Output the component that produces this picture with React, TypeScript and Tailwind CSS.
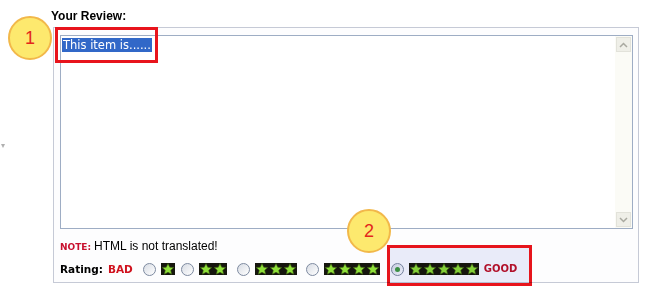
const RATINGS = [1, 2, 3, 4, 5] as const;

function Star() {
  return (
    <svg width="14" height="12" viewBox="0 0 24 22" className="shrink-0">
      <path
        d="M12 1l3.2 6.6 7.3.8-5.4 5 1.5 7.3L12 17.1l-6.6 3.6 1.5-7.3-5.4-5 7.3-.8z"
        fill="#8fe03a"
        stroke="#3c5a14"
        strokeWidth="1.2"
      />
    </svg>
  );
}

function StarBar({ count }: { count: number }) {
  return (
    <div className="flex h-[12px] items-center bg-[#16160e]">
      {Array.from({ length: count }).map((_, i) => (
        <Star key={i} />
      ))}
    </div>
  );
}

function Radio({ checked }: { checked?: boolean }) {
  return (
    <span className="flex h-[13px] w-[13px] shrink-0 items-center justify-center rounded-full border border-[#7d8aa0] bg-gradient-to-br from-[#d8dce4] to-white">
      {checked && <span className="h-[5px] w-[5px] rounded-full bg-[#3f9a45]" />}
    </span>
  );
}

function Chevron({ up }: { up?: boolean }) {
  return (
    <svg width="9" height="6" viewBox="0 0 9 6">
      <path
        d={up ? "M1 5l3.5-3.5L8 5" : "M1 1l3.5 3.5L8 1"}
        fill="none"
        stroke="#a9a9a0"
        strokeWidth="1.5"
      />
    </svg>
  );
}

function Marker({ label, className }: { label: string; className: string }) {
  return (
    <div
      className={`absolute flex h-[44px] w-[44px] items-center justify-center rounded-full border-2 border-[#f2b84a] bg-[#fde96e] text-[18px] text-[#e3261c] ${className}`}
      style={{ fontFamily: "Arial, 'Liberation Sans', sans-serif" }}
    >
      {label}
    </div>
  );
}

const GAP_BEFORE = ["ml-[10px]", "ml-[6px]", "ml-[10px]", "ml-[9px]", "ml-[11px]"];

export default function App() {
  return (
    <div
      className="relative h-[298px] w-[650px] overflow-hidden bg-white pl-[51px] pt-[9px]"
      style={{ fontFamily: "'DejaVu Sans', Verdana, sans-serif" }}
    >
      <span className="absolute left-[1px] top-[140px] text-[8px] text-[#b0b0b0]">▾</span>

      <div
        className="text-[12px] font-bold leading-[15px] text-black"
        style={{ fontFamily: "Arial, 'Liberation Sans', sans-serif" }}
      >
        Your Review:
      </div>

      <div className="ml-[2px] mt-[3px] h-[256px] w-[586px] border border-[#c6cad6] bg-[#fdfdfe] pl-[6px] pt-[7px]">
        <div className="flex h-[194px] w-[573px] border border-[#9eadc4] bg-white">
          <div className="flex flex-1 items-start pl-[1px] pt-[2px]">
            <div className="bg-[#3168c8] px-[1px] text-[11.5px] leading-[14px] text-white">
              This item is......
            </div>
          </div>
          <div className="flex w-[17px] flex-col justify-between bg-[#fbfbf6] p-[1px]">
            <div className="flex h-[15px] items-center justify-center border border-[#e2e2da] bg-[#efefe8]">
              <Chevron up />
            </div>
            <div className="flex h-[15px] items-center justify-center border border-[#e2e2da] bg-[#efefe8]">
              <Chevron />
            </div>
          </div>
        </div>

        <div
          className="mt-[9px] flex items-baseline gap-[4px] text-[12px] leading-[16px] text-black"
          style={{ fontFamily: "Arial, 'Liberation Sans', sans-serif" }}
        >
          <span
            className="text-[9px] font-bold text-[#c8102e]"
            style={{ fontFamily: "'DejaVu Sans', Verdana, sans-serif" }}
          >
            NOTE:
          </span>
          <span className="-ml-[1px]">HTML is not translated!</span>
        </div>

        <div className="mt-[6px] flex items-center text-[10.5px] font-bold leading-[16px]">
          <span className="text-black">Rating:</span>
          <span className="ml-[5px] text-[#d0121e]">BAD</span>
          {RATINGS.map((n, i) => (
            <div key={n} className={`flex items-center ${GAP_BEFORE[i]}`}>
              <Radio checked={n === 5} />
              <div className="ml-[5px]">
                <StarBar count={n} />
              </div>
            </div>
          ))}
          <span className="ml-[5px] text-[10px] text-[#c0102a]">GOOD</span>
        </div>
      </div>

      <div className="absolute left-[55px] top-[27px] h-[36px] w-[103px] border-[3px] border-[#e8141c]" />
      <div className="absolute left-[387px] top-[245px] h-[41px] w-[145px] border-[3px] border-[#e8141c] bg-[#3c50d0]/10 mix-blend-multiply" />

      <Marker label="1" className="left-[8px] top-[16px]" />
      <Marker label="2" className="left-[347px] top-[209px]" />
    </div>
  );
}
